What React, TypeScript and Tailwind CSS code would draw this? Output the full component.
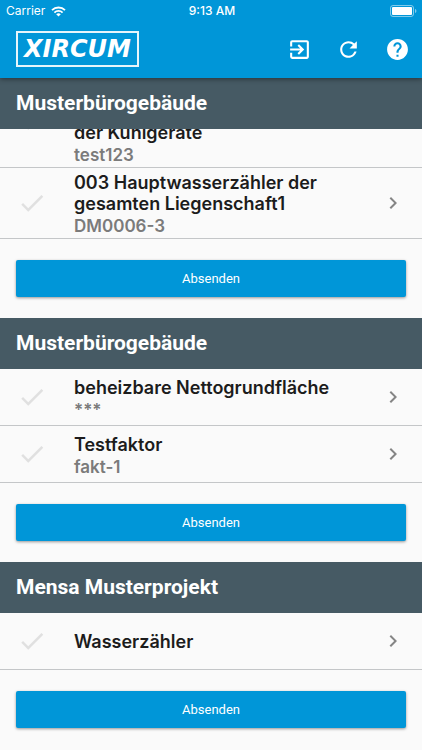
import { MdCheck, MdChevronRight, MdExitToApp, MdHelp, MdRefresh } from "react-icons/md";
import clsx from "clsx";

interface Item {
  title: string;
  code?: string;
}

interface Group {
  name: string;
  items: Item[];
  scrolled?: boolean;
}

const groups: Group[] = [
  {
    name: "Musterbürogebäude",
    scrolled: true,
    items: [
      { title: "der Kühlgeräte", code: "test123" },
      { title: "003 Hauptwasserzähler der gesamten Liegenschaft1", code: "DM0006-3" },
    ],
  },
  {
    name: "Musterbürogebäude",
    items: [
      { title: "beheizbare Nettogrundfläche", code: "***" },
      { title: "Testfaktor", code: "fakt-1" },
    ],
  },
  {
    name: "Mensa Musterprojekt",
    items: [{ title: "Wasserzähler" }],
  },
];

function StatusBar() {
  return (
    <div className="grid h-5 grid-cols-3 items-center pl-1.5 pr-1 pt-0.5 text-xs text-white">
      <div className="flex items-center gap-1.5">
        <span>Carrier</span>
        <svg width="15" height="11" viewBox="0 0 15 11" fill="none" stroke="currentColor" strokeWidth="1.8">
          <path d="M1 4.2a9.2 9.2 0 0 1 13 0" />
          <path d="M3.4 6.6a5.8 5.8 0 0 1 8.2 0" />
          <path d="M7.5 10.6 5.2 8.3a3.3 3.3 0 0 1 4.6 0z" fill="currentColor" stroke="none" />
        </svg>
      </div>
      <span className="text-center font-medium">9:13 AM</span>
      <svg className="justify-self-end" width="28" height="12" viewBox="0 0 28 12">
        <rect x="0.5" y="0.5" width="23" height="11" rx="2.5" fill="none" stroke="#fff" strokeOpacity="0.5" />
        <rect x="2" y="2" width="20" height="8" rx="1" fill="#fff" />
        <path d="M25 4v4c.9-.3 1.4-1.1 1.4-2s-.5-1.7-1.4-2z" fill="#fff" fillOpacity="0.5" />
      </svg>
    </div>
  );
}

function Header() {
  return (
    <header className="sticky top-0 z-20 bg-[#0096d8] shadow-[0_1px_5px_rgba(0,0,0,0.45)]">
      <StatusBar />
      <div className="flex h-[58px] items-center justify-between pl-4 pr-3">
        <div className="flex h-9 items-center border-2 border-white/90 px-1.5 font-['DejaVu_Sans'] text-2xl font-bold italic text-white">
          XIRCUM
        </div>
        <nav className="flex items-center gap-6 text-white">
          <button type="button" aria-label="Abmelden">
            <MdExitToApp size={25} />
          </button>
          <button type="button" aria-label="Aktualisieren">
            <MdRefresh size={25} />
          </button>
          <button type="button" aria-label="Hilfe">
            <MdHelp size={25} />
          </button>
        </nav>
      </div>
    </header>
  );
}

function ItemRow({ item, tall }: { item: Item; tall?: boolean }) {
  return (
    <li className="border-b border-[#c4c6c8]">
      <button
        type="button"
        className={clsx(
          "flex w-full items-center pl-[17px] pr-[17px] text-left",
          tall ? "h-[92px]" : "min-h-14"
        )}
      >
        <MdCheck size={30} className="shrink-0 text-[#e0e0e0]" />
        <span className={clsx("ml-[27px] flex-1 pr-10", tall && "self-end", item.code ? "pt-1" : "py-1")}>
          <span className="block text-lg leading-[21px] font-semibold text-[#1c1c1c]">{item.title}</span>
          {item.code && (
            <span className="block text-[17px] leading-6 font-semibold text-[#7b7b7b]">{item.code}</span>
          )}
        </span>
        <MdChevronRight size={24} className="shrink-0 text-[#858585]" />
      </button>
    </li>
  );
}

function GroupSection({ group }: { group: Group }) {
  return (
    <section>
      <h2 className="relative z-10 flex h-[51px] items-center bg-[#465a64] px-4 font-[Roboto] text-[21px] font-bold text-white">
        {group.name}
      </h2>
      {/* the first list is scrolled partly under its heading */}
      <ul className={clsx(group.scrolled && "-mt-[54px]")}>
        {group.items.map((item, i) => (
          <ItemRow key={item.title} item={item} tall={group.scrolled && i === 0} />
        ))}
      </ul>
      <div className="px-4 py-[21px]">
        <button
          type="button"
          className="h-[37px] w-full rounded-xs bg-[#0096d8] font-[Roboto] text-[13px] text-white shadow-[0_1px_3px_rgba(0,0,0,0.4)]"
        >
          Absenden
        </button>
      </div>
    </section>
  );
}

export default function App() {
  return (
    <div className="min-h-screen bg-[#fafafa] font-[Inter,sans-serif]">
      <Header />
      <main>
        {groups.map((group, i) => (
          <GroupSection key={i} group={group} />
        ))}
      </main>
    </div>
  );
}
